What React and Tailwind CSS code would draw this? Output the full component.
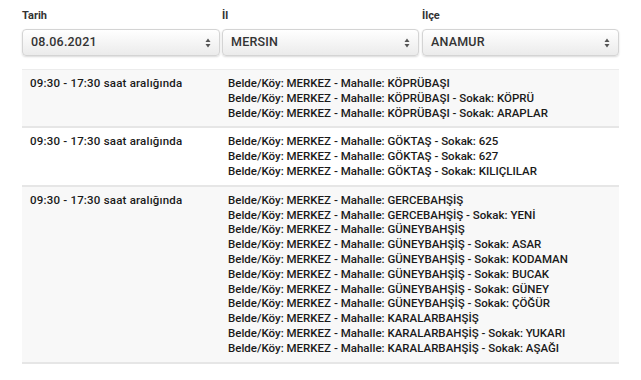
import React from "react";

const rows = [
  {
    time: "09:30 - 17:30",
    items: [
      ["KÖPRÜBAŞI"],
      ["KÖPRÜBAŞI", "KÖPRÜ"],
      ["KÖPRÜBAŞI", "ARAPLAR"],
    ],
  },
  {
    time: "09:30 - 17:30",
    items: [
      ["GÖKTAŞ", "625"],
      ["GÖKTAŞ", "627"],
      ["GÖKTAŞ", "KILIÇLILAR"],
    ],
  },
  {
    time: "09:30 - 17:30",
    items: [
      ["GERCEBAHŞİŞ"],
      ["GERCEBAHŞİŞ", "YENİ"],
      ["GÜNEYBAHŞİŞ"],
      ["GÜNEYBAHŞİŞ", "ASAR"],
      ["GÜNEYBAHŞİŞ", "KODAMAN"],
      ["GÜNEYBAHŞİŞ", "BUCAK"],
      ["GÜNEYBAHŞİŞ", "GÜNEY"],
      ["GÜNEYBAHŞİŞ", "ÇÖĞÜR"],
      ["KARALARBAHŞİŞ"],
      ["KARALARBAHŞİŞ", "YUKARI"],
      ["KARALARBAHŞİŞ", "AŞAĞI"],
    ],
  },
];

const Arrows = () => (
  <svg width="6" height="10" viewBox="0 0 6 10" className="shrink-0">
    <path d="M3 0.5 L5.5 4 L0.5 4 Z" fill="#555" />
    <path d="M3 9.5 L5.5 6 L0.5 6 Z" fill="#555" />
  </svg>
);

const Select = ({ value }) => (
  <div className="h-[27px] flex items-center justify-between pl-2 pr-[8px] rounded-[4px] border border-[#d4d4d4] bg-gradient-to-b from-white to-[#ebebeb] shadow-[0_1px_2px_rgba(0,0,0,0.15)] text-[12.5px] text-[#333] font-medium tracking-[0.2px]">
    <span>{value}</span>
    <Arrows />
  </div>
);

export default function App() {
  return (
    <div className="w-[641px] h-[380px] bg-white px-[22px] pt-[9px] font-['Roboto','Liberation_Sans',Arial,sans-serif] text-[#1a1a1a] overflow-hidden">
      <div className="grid grid-cols-[198px_197px_1fr] gap-x-[2px]">
        {[
          ["Tarih", "08.06.2021"],
          ["İl", "MERSIN"],
          ["İlçe", "ANAMUR"],
        ].map(([label, value], i) => (
          <div key={label} className={i === 2 ? "pl-px" : ""}>
            <div className="text-[11px] font-bold text-[#333] h-[20px] leading-[14px]">{label}</div>
            <Select value={value} />
          </div>
        ))}
      </div>

      <div className="mt-[13px] border-t border-[#ececec]">
        {rows.map((row, i) => (
          <div
            key={i}
            className={`flex border-b-2 border-[#e6e6e6] py-[6px] text-[11.5px] font-medium leading-[14.8px] ${i % 2 === 0 ? "bg-[#f8f8f8]" : "bg-white"}`}
          >
            <div className="w-[198px] pl-2 shrink-0 tracking-[0.2px]">
              {row.time} saat aralığında
            </div>
            <div className="pl-2">
              {row.items.map(([mah, sok], j) => (
                <div key={j}>
                  Belde/Köy: MERKEZ - Mahalle: {mah}
                  {sok && <> - Sokak: {sok}</>}
                </div>
              ))}
            </div>
          </div>
        ))}
      </div>
    </div>
  );
}
